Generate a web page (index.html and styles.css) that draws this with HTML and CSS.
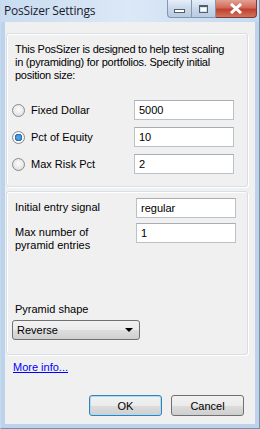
FILE: index.html
```html
<!DOCTYPE html>
<html lang="en">
<head>
  <meta charset="UTF-8">
  <title>PosSizer Settings</title>
  <link rel="stylesheet" href="styles.css">
</head>
<body>
  <div class="window">
    <div class="titlebar">
      <span class="title">PosSizer Settings</span>
      <div class="caption-buttons">
        <span class="cap cap-min"><i></i></span>
        <span class="cap cap-max"><i></i></span>
        <span class="cap cap-close">
          <svg width="14" height="11" viewBox="0 0 14 11">
            <path d="M2 1 L12 10 M12 1 L2 10" stroke="#fff" stroke-width="3" fill="none"/>
          </svg>
        </span>
      </div>
    </div>
    <div class="client">
      <div class="group group-1">
        <p class="intro">This PosSizer is designed to help test scaling in (pyramiding) for portfolios. Specify initial position size:</p>
        <div class="row">
          <label class="radio"><span class="dot"></span>Fixed Dollar</label>
          <input class="field" type="text" value="5000">
        </div>
        <div class="row">
          <label class="radio"><span class="dot checked"></span>Pct of Equity</label>
          <input class="field" type="text" value="10">
        </div>
        <div class="row">
          <label class="radio"><span class="dot"></span>Max Risk Pct</label>
          <input class="field" type="text" value="2">
        </div>
      </div>
      <div class="group group-2">
        <div class="row row-2">
          <span class="label">Initial entry signal</span>
          <input class="field" type="text" value="regular">
        </div>
        <div class="row row-2">
          <span class="label">Max number of<br>pyramid entries</span>
          <input class="field" type="text" value="1">
        </div>
        <div class="shape">
          <span class="label">Pyramid shape</span>
          <div class="select">Reverse<span class="arrow"></span></div>
        </div>
      </div>
      <a class="more" href="#">More info...</a>
      <div class="buttons">
        <button class="btn btn-default">OK</button>
        <button class="btn">Cancel</button>
      </div>
    </div>
  </div>
</body>
</html>
```

FILE: styles.css
```css
body {
  margin: 0;
  font-family: "Liberation Sans", Arial, sans-serif;
  font-size: 11px;
  color: #000;
}
.window {
  width: 260px;
  height: 429px;
  box-sizing: border-box;
  display: flex;
  flex-direction: column;
  padding: 0 4px 4px 4px;
  background: #bdd3ec;
  border: 1px solid #7a8fa8;
  border-top: none;
  border-left-color: #c8d9ec;
}
.titlebar {
  height: 22px;
  margin: 0 -4px;
  padding: 0 2px 0 3px;
  display: flex;
  align-items: flex-start;
  justify-content: space-between;
  background: linear-gradient(to right, #c9dcf1, #dbe8f6 50%, #c4d8ef);
}
.title {
  font-family: "Open Sans", "Liberation Sans", sans-serif;
  font-size: 12px;
  line-height: 22px;
  color: #1b1b2e;
  letter-spacing: -0.2px;
}
.caption-buttons {
  display: flex;
  flex-shrink: 0;
  height: 18px;
}
.cap {
  display: flex;
  flex-shrink: 0;
  align-items: center;
  justify-content: center;
  height: 17px;
  border: 1px solid #8397b0;
  border-top: none;
  background: linear-gradient(#e6eef8, #c9d8ea 50%, #b9cbe1);
}
.cap-min {
  width: 23px;
  border-radius: 0 0 0 4px;
}
.cap-min i {
  width: 9px;
  height: 2px;
  margin-top: 4px;
  background: #fff;
  border: 1px solid #525e6e;
}
.cap-max {
  width: 23px;
  border-left: none;
}
.cap-max i {
  width: 7px;
  height: 5px;
  border: 1px solid #525e6e;
  border-top-width: 2px;
  background: #fff;
  box-shadow: inset 0 0 0 1px #d7e2ef;
}
.cap-close {
  width: 40px;
  border-left: none;
  border-color: #7b3a33;
  border-radius: 0 0 4px 0;
  background: linear-gradient(#e4a192, #d2695a 45%, #c0412e 55%, #d0745e);
}
.client {
  flex: 1;
  display: flex;
  flex-direction: column;
  background: #f0f0f0;
  padding: 11px 7px 8px 1px;
}
.group {
  box-sizing: border-box;
  border: 1px solid #d5dfe5;
  border-radius: 3px;
  box-shadow: inset 1px 1px 0 #fff, 1px 1px 0 #fff;
  padding: 0 13px 0 8px;
}
.group-1 {
  height: 154px;
  padding-top: 9px;
}
.group-2 {
  height: 164px;
  margin-top: 4px;
  padding-top: 6px;
}
.intro {
  max-width: 214px;
  margin: 0 0 18px 0;
  line-height: 13px;
  letter-spacing: -0.25px;
}
.row {
  display: flex;
  justify-content: space-between;
  align-items: center;
  height: 20px;
  margin-bottom: 7px;
}
.radio {
  display: flex;
  align-items: center;
  gap: 6px;
  margin-left: -3px;
}
.dot {
  width: 11px;
  height: 11px;
  border-radius: 50%;
  border: 1px solid #8a8a8a;
  background: radial-gradient(circle at 50% 40%, #fdfdfd, #d8d8d8);
}
.dot.checked {
  background: radial-gradient(circle, #4aa0e4 0 2px, #1b5d9c 3.5px, #fff 4px, #dcdcdc);
}
.field {
  width: 100px;
  height: 20px;
  box-sizing: border-box;
  border: 1px solid #b9c1c9;
  border-top-color: #abadb3;
  padding: 0 4px;
  font-family: inherit;
  font-size: 11px;
  background: #fff;
  outline: none;
}
.row-2 {
  align-items: flex-start;
  height: auto;
  margin-bottom: 5px;
}
.row-2 .field {
  margin-right: -2px;
}
.label {
  line-height: 13px;
  padding-top: 3px;
}
.shape {
  margin-top: 48px;
  display: flex;
  flex-direction: column;
  gap: 4px;
}
.select {
  width: 128px;
  height: 20px;
  box-sizing: border-box;
  margin-left: -3px;
  border: 1px solid #707070;
  border-radius: 3px;
  background: linear-gradient(#f2f2f2, #ebebeb 50%, #dddddd 51%, #cfcfcf);
  display: flex;
  align-items: center;
  justify-content: space-between;
  padding: 0 6px 0 4px;
}
.arrow {
  width: 0;
  height: 0;
  border-left: 4px solid transparent;
  border-right: 4px solid transparent;
  border-top: 4px solid #000;
}
.more {
  margin: 6px 0 0 7px;
  color: #0000ff;
  align-self: flex-start;
}
.buttons {
  margin-top: auto;
  display: flex;
  justify-content: flex-end;
  gap: 9px;
  padding-right: 4px;
}
.btn {
  width: 73px;
  height: 21px;
  border: 1px solid #707070;
  border-radius: 3px;
  background: linear-gradient(#f2f2f2, #ebebeb 50%, #dddddd 51%, #cfcfcf);
  font-family: inherit;
  font-size: 11px;
  padding: 0;
}
.btn-default {
  border-color: #3c7fb1;
  box-shadow: inset 0 0 0 1px #a3e0f7;
}
```
